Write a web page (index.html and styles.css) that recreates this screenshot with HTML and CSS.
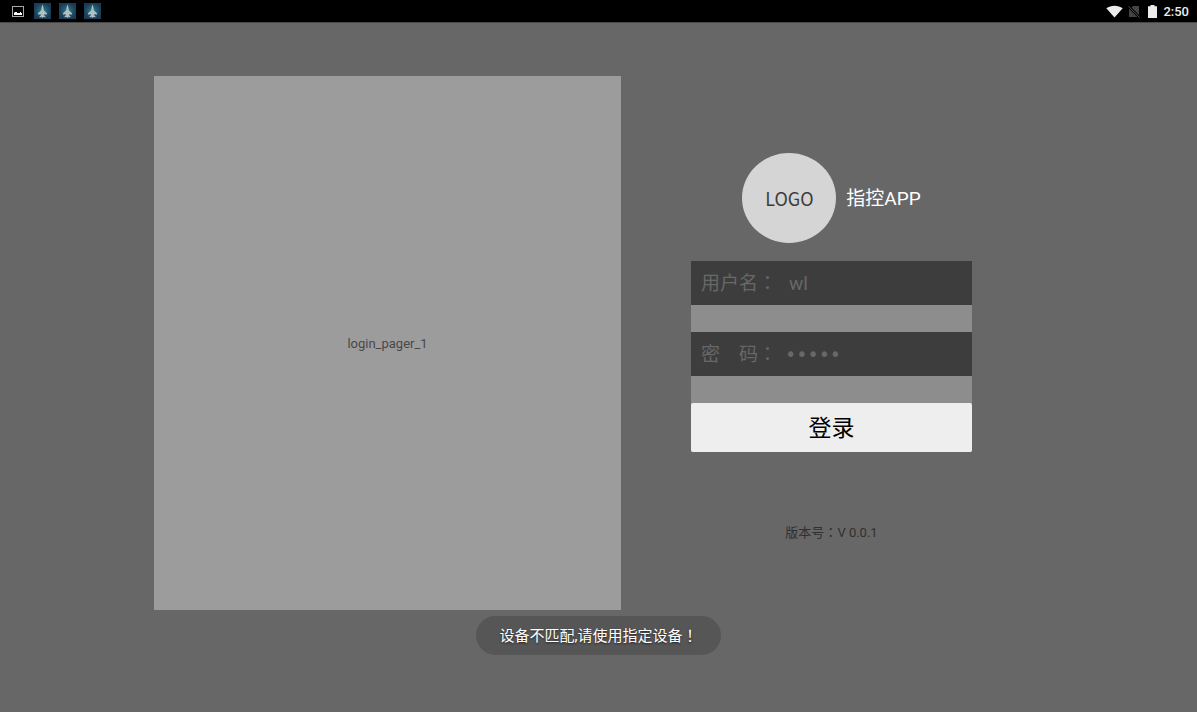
FILE: index.html
```html
<!DOCTYPE html>
<html lang="zh-CN">
<head>
<meta charset="utf-8">
<meta name="viewport" content="width=device-width, initial-scale=1">
<title>指控APP</title>
<link rel="stylesheet" href="styles.css">
</head>
<body>
<svg class="defs" width="0" height="0" aria-hidden="true">
  <defs>
    <radialGradient id="glow"><stop offset="0" stop-color="#28808a"/><stop offset="1" stop-color="#1b3b57"/></radialGradient>
    <symbol id="jet" viewBox="0 0 17 16">
      <rect width="17" height="16" fill="url(#glow)"/>
      <path d="M8.500 1.500 9.200 3.500 9.800 7.300 13 10.300V11.500L10.200 11.300 10.300 12.500 11.500 13.500V14.300L9.300 14 8.500 15 7.700 14 5.500 14.300V13.500L6.700 12.500 6.800 11.300 4 11.500V10.300L7.200 7.300 7.800 3.500z" fill="#b3bec1"/>
    </symbol>
  </defs>
</svg>
<header class="status-bar">
  <div class="notifications">
    <svg class="picture-icon" width="12" height="11" viewBox="0 0 12 11" aria-hidden="true"><rect x=".5" y=".5" width="11" height="10" fill="none" stroke="#a8a8a8"/><path d="M2 9V6.500h1V6h2v1h3V6h1v1h1v2z" fill="#fff"/></svg>
    <svg width="17" height="16" aria-hidden="true"><use href="#jet"/></svg>
    <svg width="17" height="16" aria-hidden="true"><use href="#jet"/></svg>
    <svg width="17" height="16" aria-hidden="true"><use href="#jet"/></svg>
  </div>
  <div class="system">
    <svg width="17" height="13" viewBox="0 0 17 13" aria-hidden="true"><path d="M.3 3.300C4.800-.2 12.200-.2 16.700 3.300L8.500 12.500z" fill="#ececec"/></svg>
    <svg class="sim-icon" width="12" height="13" viewBox="0 0 12 13" aria-hidden="true"><path d="M5 1h6v9L3.500 2.500zM1 3.800 9.300 12H1z" fill="#444"/><path d="M.4 1.300 11.600 12.500" stroke="#505050"/></svg>
    <svg class="battery-icon" width="9" height="13" viewBox="0 0 9 13" aria-hidden="true"><path d="M2.500 0h4v1.300H9V13H0V1.300h2.500z" fill="#ececec"/></svg>
    <time class="clock">2:50</time>
  </div>
</header>
<main class="login">
  <section class="pager">login_pager_1</section>
  <section class="panel">
    <div class="brand">
      <div class="logo">LOGO</div>
      <h1 class="app-name">指控APP</h1>
    </div>
    <form class="form">
      <div class="field">
        <label class="field-label" for="user">用户名<span lang="zh-TW">：</span></label>
        <input id="user" class="text-input" type="text" value="wl">
      </div>
      <div class="field">
        <label class="field-label" for="pass">密　码<span lang="zh-TW">：</span></label>
        <input id="pass" class="text-input secret" type="password" value="12345">
      </div>
      <button class="submit" type="button">登录</button>
    </form>
    <p class="version">版本号<span lang="zh-TW">：</span>V 0.0.1</p>
  </section>
</main>
<div class="toast" role="status">设备不匹配,请使用指定设备<span lang="zh-TW">！</span></div>
</body>
</html>
```
FILE: styles.css
```css
* {
  box-sizing: border-box;
}

body {
  margin: 0;
  min-height: 100vh;
  display: flex;
  flex-direction: column;
  background: #676767;
  font-family: Roboto, "Noto Sans CJK TC", sans-serif;
  font-size: 13px;
}

.defs {
  position: absolute;
}

.status-bar {
  display: flex;
  justify-content: space-between;
  align-items: center;
  height: 23px;
  padding: 0 8px 0 12px;
  background: #000;
  border-bottom: 1px solid #484848;
}

.notifications,
.system {
  display: flex;
  align-items: center;
}

.notifications {
  gap: 8px;
}

.picture-icon {
  margin-right: 2px;
}

.sim-icon {
  margin: 0 8px 0 5px;
}

.clock {
  margin-left: 6px;
  color: #ececec;
  font-weight: 500;
}

.login {
  flex: 1;
  display: grid;
  grid-template-columns:
    minmax(0, 154fr) minmax(0, 467fr) minmax(0, 70fr)
    minmax(0, 281fr) minmax(0, 225fr);
  padding: 53px 0 102px;
}

.pager {
  grid-column: 2;
  display: flex;
  align-items: center;
  justify-content: center;
  background: #9c9c9c;
  color: #484848;
}

.panel {
  grid-column: 4;
  padding-top: 77px;
}

.brand {
  display: flex;
  align-items: center;
  justify-content: center;
  gap: 10px;
}

.logo {
  display: flex;
  align-items: center;
  justify-content: center;
  width: 94px;
  height: 90px;
  border-radius: 50%;
  background: #d5d5d5;
  color: #3c3c3c;
  font-family: "Noto Sans CJK SC", sans-serif;
  font-size: 18px;
}

.app-name {
  margin: 0;
  padding-bottom: 4px;
  color: #fff;
  font-size: 19px;
  font-weight: 400;
}

.form {
  display: flex;
  flex-direction: column;
  gap: 27px;
  margin-top: 18px;
  background: #8d8d8d;
}

.field {
  display: flex;
  align-items: center;
  height: 44px;
  padding-left: 10px;
  background: #3d3d3d;
  color: #686868;
  font-size: 19px;
}

.field-label {
  padding-bottom: 4px;
}

.text-input {
  flex: 1;
  min-width: 0;
  height: 44px;
  padding: 0 0 0 12px;
  border: 0;
  outline: 0;
  background: transparent;
  color: inherit;
  font: inherit;
}

.secret {
  padding-left: 8px;
  font-family: "DejaVu Sans", sans-serif;
}

.submit {
  height: 49px;
  padding: 0 0 4px;
  border: 0;
  border-radius: 2px;
  background: #eee;
  color: #000;
  font-family: inherit;
  font-size: 23px;
}

.version {
  margin: 71px 0 0;
  color: #303030;
  line-height: 20px;
  text-align: center;
}

.toast {
  position: fixed;
  bottom: 57px;
  left: 50%;
  transform: translateX(-50%);
  padding: 2px 24px 0;
  border-radius: 20px;
  background: #565656;
  color: #fff;
  font-size: 15px;
  line-height: 37px;
  white-space: nowrap;
  text-shadow: 0 1px 2px #222;
}
```
